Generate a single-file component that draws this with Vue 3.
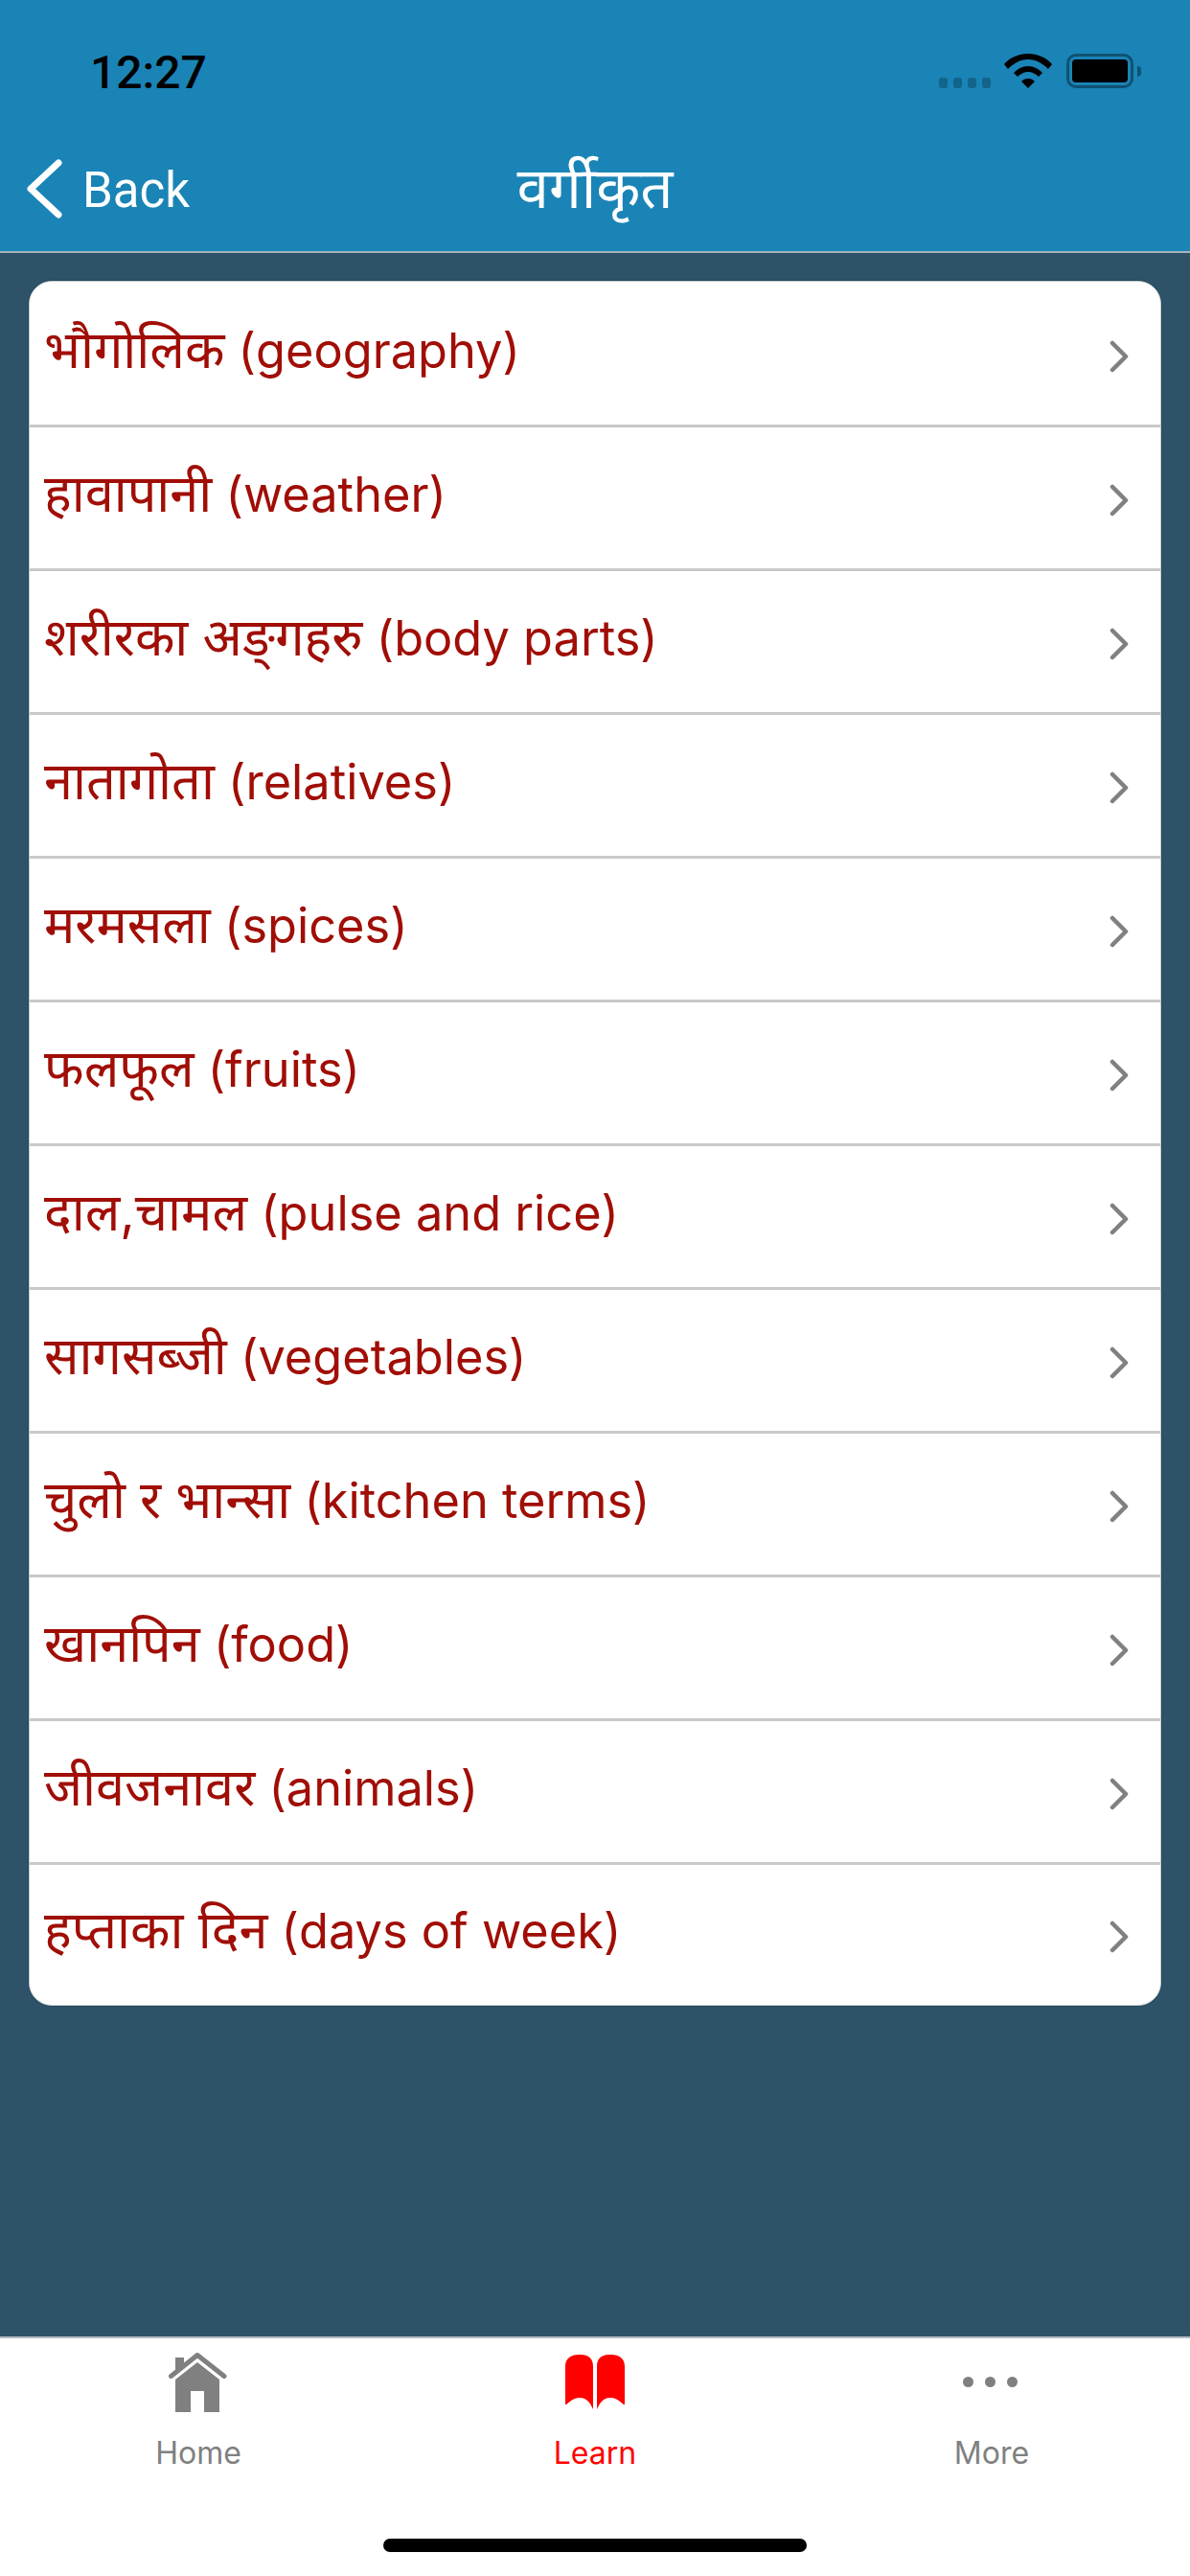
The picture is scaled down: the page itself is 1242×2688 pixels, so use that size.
<template>
  <div class="screen">
    <header class="topbar">
      <div class="status">
        <span class="time">12:27</span>
        <div class="status-icons">
          <div class="signal"><i></i><i></i><i></i><i></i></div>
          <svg class="wifi" width="50" height="36" viewBox="0 0 50 36">
            <path d="M0 11 C6 4 15 0 25 0 C35 0 44 4 50 11 L46 16 C40 10 33 6 25 6 C17 6 10 10 4 16 Z" fill="#000" />
            <path d="M10 20 C14 16 19 13 25 13 C31 13 36 16 40 20 L36 24 C33 21 29 19 25 19 C21 19 17 21 14 24 Z" fill="#000" />
            <path d="M18 29 C20 27 22 26 25 26 C28 26 30 27 32 29 L25 36 Z" fill="#000" />
          </svg>
          <div class="battery"><div class="battery-fill"></div></div>
          <div class="battery-cap"></div>
        </div>
      </div>
      <nav class="navbar">
        <div class="back">
          <svg width="37" height="62" viewBox="0 0 37 62">
            <path d="M33 4 L4 31 L33 58" fill="none" stroke="#fff" stroke-width="7" stroke-linecap="round" stroke-linejoin="round" />
          </svg>
          <span>Back</span>
        </div>
        <div class="title">वर्गीकृत</div>
      </nav>
    </header>

    <main class="content">
      <ul class="card">
        <li v-for="item in items" :key="item.en" class="row">
          <span class="label">{{ item.np }} <span class="en">{{ item.en }}</span></span>
          <svg class="chevron" width="20" height="34" viewBox="0 0 20 34">
            <path d="M3 3 L17 17 L3 31" fill="none" stroke="#808080" stroke-width="4.5" stroke-linecap="round" stroke-linejoin="round" />
          </svg>
        </li>
      </ul>
    </main>

    <footer class="tabbar">
      <div class="tabs">
        <div class="tab">
          <svg width="62" height="62" viewBox="0 0 62 62">
            <path d="M2.5 24.5 L30 2.5 L58 24.5" fill="none" stroke="#808080" stroke-width="5" stroke-linecap="round" stroke-linejoin="round" />
            <path d="M7 5 H16 V13 L7 20 Z" fill="#808080" />
            <path d="M30 10 L53 28 V62 H37 V40 H23 V62 H7 V28 Z" fill="#808080" />
          </svg>
          <span>Home</span>
        </div>
        <div class="tab active">
          <svg width="62" height="62" viewBox="0 0 62 62">
            <path d="M0 14 C0 6 6 2 14 2 H16 C24 2 29 6 29 14 V59 C26 53 23 47 15 47 C8 47 4 52 1 54 H0 Z" fill="#fe0000" />
            <path d="M62 14 C62 6 56 2 48 2 H46 C38 2 33 6 33 14 V59 C36 53 39 47 47 47 C54 47 58 52 61 54 H62 Z" fill="#fe0000" />
          </svg>
          <span>Learn</span>
        </div>
        <div class="tab">
          <svg width="62" height="62" viewBox="0 0 62 62">
            <circle cx="6.5" cy="30.5" r="5.5" fill="#808080" />
            <circle cx="29.5" cy="30.5" r="5.5" fill="#808080" />
            <circle cx="52.5" cy="30.5" r="5.5" fill="#808080" />
          </svg>
          <span>More</span>
        </div>
      </div>
      <div class="home-indicator"></div>
    </footer>
  </div>
</template>

<script setup>
const items = [
  { np: 'भौगोलिक', en: '(geography)' },
  { np: 'हावापानी', en: '(weather)' },
  { np: 'शरीरका अङ्‌गहरु', en: '(body parts)' },
  { np: 'नातागोता', en: '(relatives)' },
  { np: 'मरमसला', en: '(spices)' },
  { np: 'फलफूल', en: '(fruits)' },
  { np: 'दाल,चामल', en: '(pulse and rice)' },
  { np: 'सागसब्जी', en: '(vegetables)' },
  { np: 'चुलो र भान्सा', en: '(kitchen terms)' },
  { np: 'खानपिन', en: '(food)' },
  { np: 'जीवजनावर', en: '(animals)' },
  { np: 'हप्ताका दिन', en: '(days of week)' }
];
</script>

<style scoped>
.screen {
  width: 1242px;
  height: 2688px;
  display: flex;
  flex-direction: column;
  background: #2e5368;
  font-family: Inter, "Noto Sans", "Noto Sans Devanagari", sans-serif;
}

.topbar {
  height: 264px;
  box-sizing: border-box;
  background: #1a84b6;
  border-bottom: 2px solid #a5b4bc;
}

.status {
  height: 132px;
  box-sizing: border-box;
  padding: 0 51px 0 94px;
  display: flex;
  justify-content: space-between;
}

.time {
  margin-top: 48px;
  font-family: Roboto, sans-serif;
  font-size: 48px;
  line-height: 56px;
  font-weight: 500;
  color: #000;
}

.status-icons {
  display: flex;
  align-items: flex-start;
  padding-top: 56px;
}

.signal {
  display: flex;
  gap: 5.5px;
  margin-top: 25px;
  margin-right: 14px;
}

.signal i {
  width: 9.5px;
  height: 11px;
  border-radius: 3px;
  background: #13648b;
}

.wifi {
  margin-right: 15px;
}

.battery {
  width: 70px;
  height: 36px;
  box-sizing: border-box;
  padding: 3px;
  border: 3px solid #0f5274;
  border-radius: 10px;
}

.battery-fill {
  height: 100%;
  background: #000;
  border-radius: 4px;
}

.battery-cap {
  width: 4px;
  height: 11px;
  margin-top: 13px;
  margin-left: 4px;
  border-radius: 0 4px 4px 0;
  background: #0f5274;
}

.navbar {
  position: relative;
  height: 130px;
  display: flex;
  align-items: center;
}

.back {
  display: flex;
  align-items: center;
  gap: 21px;
  margin-left: 28px;
  color: #fff;
  font-family: Roboto, sans-serif;
  font-size: 51px;
}

.back span {
  margin-top: 3px;
}

.title {
  position: absolute;
  left: 0;
  right: 0;
  top: 28px;
  text-align: center;
  color: #fff;
  font-size: 60px;
  line-height: 70px;
}

.content {
  flex: 1;
  padding: 29px 30px 0;
}

.card {
  list-style: none;
  margin: 0;
  padding: 0;
  background: #fff;
  border: 1px solid #c9c9c9;
  border-radius: 24px;
  box-shadow: 0 0 0 1px #1f4a60;
  overflow: hidden;
}

.row {
  height: 150px;
  box-sizing: border-box;
  padding: 0 33px 0 15px;
  display: flex;
  align-items: center;
  justify-content: space-between;
  border-top: 3px solid #c9c9c9;
}

.row:first-child {
  height: 149px;
  border-top-color: transparent;
}

.row:last-child {
  height: 149px;
}

.label {
  font-size: 54px;
  line-height: 70px;
  color: #a00e06;
  margin-top: -9px;
}

.en {
  font-size: 50.5px;
  margin-left: -1px;
}

.chevron {
  margin-top: 4px;
}

.tabbar {
  height: 250px;
  box-sizing: border-box;
  background: #fff;
  border-top: 2px solid #b4bcc2;
  display: flex;
  flex-direction: column;
  align-items: center;
}

.tabs {
  width: 100%;
  display: flex;
  padding-top: 15px;
}

.tab {
  flex: 1;
  display: flex;
  flex-direction: column;
  align-items: center;
  color: #808080;
  font-size: 32px;
  line-height: 42px;
}

.tab span {
  margin-top: 22px;
}

.tab.active {
  color: #fe0000;
}

.home-indicator {
  width: 442px;
  height: 14px;
  margin-top: 68px;
  border-radius: 7px;
  background: #000;
}
</style>
